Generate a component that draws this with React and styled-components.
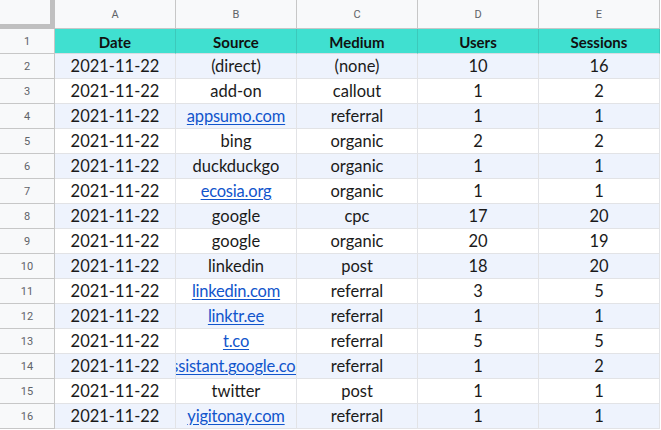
import styled, { createGlobalStyle, css } from 'styled-components'

const GlobalStyle = createGlobalStyle`
  html, body {
    margin: 0;
    padding: 0;
    background: #ffffff;
    overflow: hidden;
  }
`

const rows = [
  ['2021-11-22', '(direct)', '(none)', '10', '16'],
  ['2021-11-22', 'add-on', 'callout', '1', '2'],
  ['2021-11-22', 'appsumo.com', 'referral', '1', '1', true],
  ['2021-11-22', 'bing', 'organic', '2', '2'],
  ['2021-11-22', 'duckduckgo', 'organic', '1', '1'],
  ['2021-11-22', 'ecosia.org', 'organic', '1', '1', true],
  ['2021-11-22', 'google', 'cpc', '17', '20'],
  ['2021-11-22', 'google', 'organic', '20', '19'],
  ['2021-11-22', 'linkedin', 'post', '18', '20'],
  ['2021-11-22', 'linkedin.com', 'referral', '3', '5', true],
  ['2021-11-22', 'linktr.ee', 'referral', '1', '1', true],
  ['2021-11-22', 't.co', 'referral', '5', '5', true],
  ['2021-11-22', 'assistant.google.com', 'referral', '1', '2', true],
  ['2021-11-22', 'twitter', 'post', '1', '1'],
  ['2021-11-22', 'yigitonay.com', 'referral', '1', '1', true],
]

const columns = ['A', 'B', 'C', 'D', 'E']
const headers = ['Date', 'Source', 'Medium', 'Users', 'Sessions']

const Sheet = styled.div`
  display: grid;
  grid-template-columns: 55px repeat(5, 121px);
  grid-template-rows: 29px;
  grid-auto-rows: 25px;
  font-family: Lato, "Open Sans", sans-serif;
`

// frozen corner with the thick grey freeze bars
const Corner = styled.div`
  box-sizing: border-box;
  background: #f8f9fa;
  border-right: 5px solid #c0c0c0;
  border-bottom: 5px solid #c0c0c0;
`

const ColHead = styled.div`
  box-sizing: border-box;
  display: flex;
  align-items: center;
  justify-content: center;
  background: #f8f9fa;
  color: #5f6368;
  font-family: Roboto, Arial, sans-serif;
  font-size: 11px;
  border-right: 1px solid #c7c7c7;
  border-bottom: 1px solid #c7c7c7;
`

const RowHead = styled.div`
  box-sizing: border-box;
  display: flex;
  align-items: center;
  justify-content: center;
  background: #f8f9fa;
  color: #5f6368;
  font-family: Roboto, Arial, sans-serif;
  font-size: 11px;
  border-right: 1px solid #c7c7c7;
  border-bottom: 1px solid #c7c7c7;
`

const Cell = styled.div`
  box-sizing: border-box;
  display: flex;
  align-items: center;
  justify-content: center;
  overflow: hidden;
  white-space: nowrap;
  font-size: 16.5px;
  color: #1a1a1a;
  border-right: 1px solid #e2e3e6;
  border-bottom: 1px solid #e2e3e6;
  background: ${p => (p.$band ? '#eef3fd' : '#ffffff')};
  ${p =>
    p.$head &&
    css`
      background: #40e0d0;
      font-weight: 700;
      font-size: 15px;
      padding-top: 1px;
      color: #111;
      border-right-color: #3cc9bb;
      border-bottom-color: #d8dce3;
    `}
`

const Link = styled.span`
  color: #1155cc;
  text-decoration: underline;
  text-underline-offset: 2px;
  letter-spacing: -0.2px;
`

export default function App() {
  return (
    <>
      <GlobalStyle />
      <Sheet>
        <Corner />
        {columns.map(c => (
          <ColHead key={c}>{c}</ColHead>
        ))}
        <RowHead>1</RowHead>
        {headers.map(h => (
          <Cell key={h} $head>
            {h}
          </Cell>
        ))}
        {rows.map((r, i) => {
          const band = i % 2 === 0
          return [
            <RowHead key={'h' + i}>{i + 2}</RowHead>,
            ...r.slice(0, 5).map((v, j) => (
              <Cell key={i + '-' + j} $band={band}>
                {j === 1 && r[5] ? <Link>{v}</Link> : v}
              </Cell>
            )),
          ]
        })}
      </Sheet>
    </>
  )
}
